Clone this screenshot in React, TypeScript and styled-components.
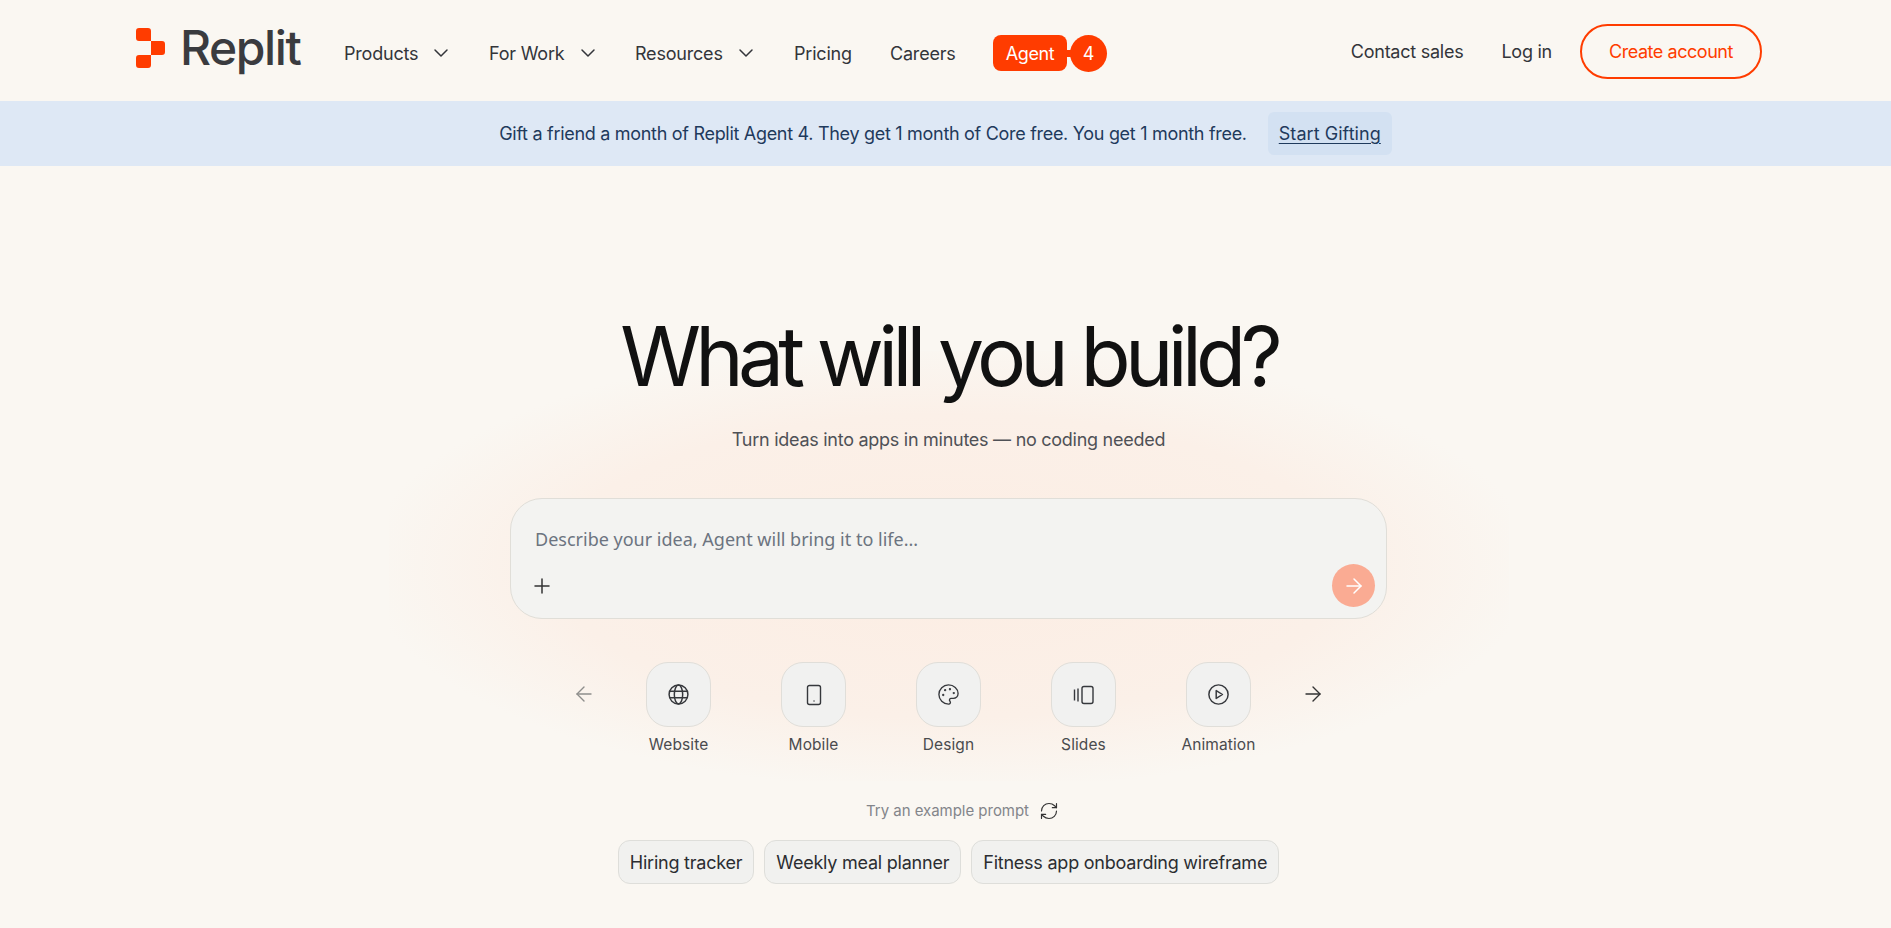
import React from "react";
import styled, { createGlobalStyle } from "styled-components";
import { ArrowLeft, ArrowRight, ChevronDown, Palette, Plus, RefreshCw } from "lucide-react";

const SANS = `"Inter", "Liberation Sans", sans-serif`;

const GlobalStyle = createGlobalStyle`
   html, body {
      margin: 0;
      padding: 0;
      height: 100%;
      background: #faf7f2;
      overflow: hidden;
   }
   * {
      box-sizing: border-box;
   }
`;

const navLinks = [
   { name: "Products", menu: true, width: 145 },
   { name: "For Work", menu: true, width: 146 },
   { name: "Resources", menu: true, width: 159 },
   { name: "Pricing", menu: false, width: 96 },
   { name: "Careers", menu: false, width: 103 },
];

const GlobeIcon = () => (
   <svg width="23" height="23" viewBox="0 0 22 22" fill="none" stroke="currentColor" strokeWidth="1.4">
      <circle cx="11" cy="11" r="9" />
      <ellipse cx="11" cy="11" rx="4" ry="9" />
      <path d="M2.8 7.8h16.4M2.8 14.2h16.4" />
   </svg>
);

const TabletIcon = () => (
   <svg width="22" height="22" viewBox="0 0 22 22" fill="none" stroke="currentColor" strokeWidth="1.4">
      <rect x="4.5" y="1.5" width="13" height="19" rx="2" />
      <path d="M11 17h.02" strokeLinecap="round" />
   </svg>
);

const SlidesIcon = () => (
   <svg width="22" height="22" viewBox="0 0 22 22" fill="none" stroke="currentColor" strokeWidth="1.4">
      <rect x="9" y="2.5" width="11" height="17" rx="2" />
      <path d="M1.5 5.5v11M5 4.5v13" />
   </svg>
);

const PlayIcon = () => (
   <svg width="23" height="23" viewBox="0 0 22 22" fill="none" stroke="currentColor" strokeWidth="1.4" strokeLinejoin="round">
      <circle cx="11" cy="11" r="9.2" />
      <path d="M8.8 7.2v7.6l6-3.8z" />
   </svg>
);

const categories = [
   { name: "Website", icon: <GlobeIcon /> },
   { name: "Mobile", icon: <TabletIcon /> },
   { name: "Design", icon: <Palette size={23} strokeWidth={1.4} /> },
   { name: "Slides", icon: <SlidesIcon /> },
   { name: "Animation", icon: <PlayIcon /> },
];

const prompts = ["Hiring tracker", "Weekly meal planner", "Fitness app onboarding wireframe"];

const LogoMark = () => (
   <svg width="29" height="40" viewBox="0 0 29 40" fill="#ff3c00">
      <path d="M0 3a3 3 0 0 1 3-3h9a3 3 0 0 1 3 3v10h11a3 3 0 0 1 3 3v8a3 3 0 0 1-3 3H15v10a3 3 0 0 1-3 3H3a3 3 0 0 1-3-3V30a3 3 0 0 1 3-3h12V13H3a3 3 0 0 1-3-3z" />
   </svg>
);

const App = () => {
   return (
      <Page>
         <GlobalStyle />
         <Header>
            <LeftGroup>
               <Logo>
                  <LogoMark />
                  <LogoText>Replit</LogoText>
               </Logo>
               <Nav>
                  {navLinks.map((link) => (
                     <NavItem key={link.name} $width={link.width}>
                        {link.name}
                        {link.menu && <ChevronDown size={24} strokeWidth={1.5} />}
                     </NavItem>
                  ))}
                  <AgentBadge>
                     <AgentPill>Agent</AgentPill>
                     <AgentDot>4</AgentDot>
                  </AgentBadge>
               </Nav>
            </LeftGroup>
            <RightGroup>
               <PlainLink>Contact sales</PlainLink>
               <PlainLink>Log in</PlainLink>
               <CreateButton>Create account</CreateButton>
            </RightGroup>
         </Header>

         <Banner>
            <span>Gift a friend a month of Replit Agent 4. They get 1 month of Core free. You get 1 month free.</span>
            <GiftButton>Start Gifting</GiftButton>
         </Banner>

         <Hero>
            <Glow />
            <Title>What will you build?</Title>
            <Subtitle>Turn ideas into apps in minutes — no coding needed</Subtitle>

            <PromptBox>
               <Placeholder>Describe your idea, Agent will bring it to life...</Placeholder>
               <PromptFooter>
                  <PlusButton>
                     <Plus size={24} strokeWidth={1.5} />
                  </PlusButton>
                  <SendButton>
                     <ArrowRight size={24} strokeWidth={1.5} />
                  </SendButton>
               </PromptFooter>
            </PromptBox>

            <CategoryRow>
               <ArrowButton $muted>
                  <ArrowLeft size={24} strokeWidth={1.4} />
               </ArrowButton>
               {categories.map((category) => (
                  <Category key={category.name}>
                     <CategoryTile>{category.icon}</CategoryTile>
                     <CategoryLabel>{category.name}</CategoryLabel>
                  </Category>
               ))}
               <ArrowButton>
                  <ArrowRight size={24} strokeWidth={1.4} />
               </ArrowButton>
            </CategoryRow>

            <ExampleLabel>
               Try an example prompt
               <RefreshCw size={20} strokeWidth={1.4} color="#333" />
            </ExampleLabel>

            <PromptChips>
               {prompts.map((prompt) => (
                  <Chip key={prompt}>{prompt}</Chip>
               ))}
            </PromptChips>
         </Hero>
      </Page>
   );
};

const Page = styled.div`
   min-height: 928px;
   background: #faf7f2;
   font-family: ${SANS};
   color: #2b2d31;
   overflow: hidden;
`;

const Header = styled.header`
   height: 101px;
   padding: 2px 129px 0 136px;
   display: flex;
   align-items: center;
   justify-content: space-between;
`;

const LeftGroup = styled.div`
   display: flex;
   align-items: center;
`;

const Logo = styled.div`
   display: flex;
   align-items: center;
   gap: 15px;
   width: 208px;
   margin-bottom: 7px;
`;

const LogoText = styled.span`
   font-size: 48px;
   font-weight: 500;
   letter-spacing: -1.4px;
   line-height: 1;
   color: #3a3b3f;
`;

const Nav = styled.nav`
   display: flex;
   align-items: center;
   padding-top: 3px;
`;

const NavItem = styled.a<{ $width: number }>`
   width: ${(p) => p.$width}px;
   display: flex;
   align-items: center;
   gap: 11px;
   font-size: 18px;
   letter-spacing: -0.2px;
   color: #33353a;
`;

const AgentBadge = styled.div`
   display: flex;
   align-items: center;
   gap: 3px;
`;

const AgentPill = styled.span`
   height: 36px;
   width: 74px;
   border-radius: 8px;
   background: #ff3c00;
   color: #fff;
   display: flex;
   align-items: center;
   justify-content: center;
   font-size: 18px;
   letter-spacing: -0.4px;
`;

const AgentDot = styled.span`
   position: relative;
   width: 37px;
   height: 37px;
   border-radius: 50%;
   background: #ff3c00;
   color: #fff;
   display: flex;
   align-items: center;
   justify-content: center;
   font-size: 18px;

   &::before {
      content: "";
      position: absolute;
      left: -5px;
      top: 15px;
      width: 7px;
      height: 7px;
      background: #ff3c00;
   }
`;

const RightGroup = styled.div`
   display: flex;
   align-items: center;
   gap: 38px;
`;

const PlainLink = styled.a`
   font-size: 18px;
   letter-spacing: -0.25px;
   color: #33353a;
`;

const CreateButton = styled.button`
   width: 182px;
   height: 55px;
   margin-left: -10px;
   border: 2px solid #ff3c00;
   border-radius: 28px;
   background: transparent;
   color: #ff3c00;
   font-family: inherit;
   font-size: 18px;
   letter-spacing: -0.45px;
`;

const Banner = styled.div`
   height: 65px;
   background: #dee8f5;
   color: #1f3a5c;
   display: flex;
   align-items: center;
   justify-content: center;
   gap: 21px;
   font-size: 18px;
   letter-spacing: -0.3px;
`;

const GiftButton = styled.a`
   height: 43px;
   padding: 0 11px;
   display: flex;
   align-items: center;
   border-radius: 6px;
   background: #d3e1f2;
   letter-spacing: 0.05px;
   text-decoration: underline;
   text-underline-offset: 3px;
`;

const Hero = styled.main`
   position: relative;
   display: flex;
   flex-direction: column;
   align-items: center;
   padding: 140px 0 0 6px;
`;

const Glow = styled.div`
   position: absolute;
   left: 50%;
   top: 185px;
   margin-left: 3px;
   width: 1120px;
   height: 430px;
   transform: translateX(-50%);
   background: radial-gradient(ellipse at center, #fcede3 0%, #fbf0e8 50%, rgba(250, 247, 242, 0) 74%);
   pointer-events: none;
`;

const Title = styled.h1`
   position: relative;
   margin: 0;
   font-size: 82px;
   line-height: 102px;
   font-weight: 400;
   letter-spacing: -5.7px;
   color: #111;
`;

const Subtitle = styled.p`
   position: relative;
   margin: 19px 0 0;
   font-size: 18px;
   line-height: 26px;
   letter-spacing: -0.27px;
   color: #4f5156;
`;

const PromptBox = styled.div`
   position: relative;
   width: 877px;
   height: 121px;
   margin-top: 45px;
   padding: 24px 11px 11px 24px;
   border: 1px solid #e0ded8;
   border-radius: 32px;
   background: #f3f3f1;
   display: flex;
   flex-direction: column;
   justify-content: space-between;
`;

const Placeholder = styled.div`
   font-family: "Noto Sans", "Open Sans", sans-serif;
   font-size: 18px;
   line-height: 32px;
   color: #6c7480;
`;

const PromptFooter = styled.div`
   display: flex;
   align-items: center;
   justify-content: space-between;
`;

const PlusButton = styled.span`
   margin-left: -5px;
   display: flex;
   color: #333;
`;

const SendButton = styled.button`
   width: 43px;
   height: 43px;
   padding: 0;
   border: none;
   border-radius: 50%;
   background: #faab93;
   color: #fff;
   display: flex;
   align-items: center;
   justify-content: center;
`;

const CategoryRow = styled.div`
   position: relative;
   margin-top: 43px;
   display: flex;
   align-items: flex-start;
`;

const ArrowButton = styled.div<{ $muted?: boolean }>`
   width: 36px;
   height: 64px;
   display: flex;
   align-items: center;
   justify-content: center;
   color: ${(p) => (p.$muted ? "#8e8e8c" : "#333")};
   &:first-child {
      margin-right: 9px;
   }
   &:last-child {
      margin-left: 9px;
   }
`;

const Category = styled.div`
   width: 135px;
   display: flex;
   flex-direction: column;
   align-items: center;
   gap: 7px;
`;

const CategoryTile = styled.div`
   width: 65px;
   height: 65px;
   border: 1px solid #e0ded9;
   border-radius: 22px;
   background: #f1f1f0;
   color: #36383c;
   display: flex;
   align-items: center;
   justify-content: center;
`;

const CategoryLabel = styled.span`
   font-size: 15.5px;
   line-height: 22px;
   letter-spacing: 0.1px;
   color: #4a4b4e;
`;

const ExampleLabel = styled.div`
   position: relative;
   margin: 44px 0 0 28px;
   display: flex;
   align-items: center;
   gap: 10px;
   font-size: 15px;
   line-height: 22px;
   letter-spacing: -0.03px;
   color: #83858a;
`;

const PromptChips = styled.div`
   position: relative;
   margin-top: 18px;
   display: flex;
   gap: 10px;
`;

const Chip = styled.button`
   height: 44px;
   padding: 0 11px;
   border: 1px solid #dededa;
   border-radius: 12px;
   background: #f1f1ef;
   color: #2b2d31;
   font-family: inherit;
   font-size: 18px;
   letter-spacing: -0.23px;
`;

export default App;
